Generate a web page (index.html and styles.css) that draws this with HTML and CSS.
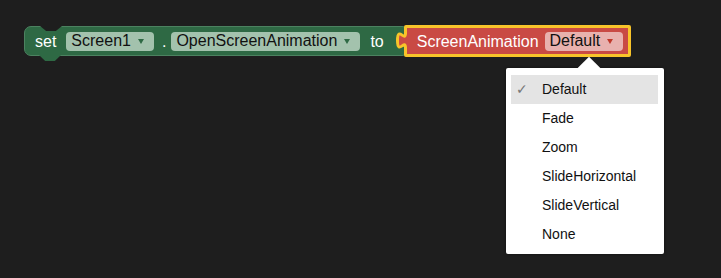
FILE: index.html
```html
<!DOCTYPE html>
<html lang="en">
	<head>
		<meta charset="UTF-8">
		<title>Blocks</title>
		<link rel="stylesheet" href="styles.css">
	</head>
	<body>
		<div class="workspace">
			<div class="stmt">
				<div class="block set-block">
					<span class="label">set</span>
					<span class="field green">Screen1<i class="caret"></i></span>
					<span class="label dot">.</span>
					<span class="field green">OpenScreenAnimation<i class="caret"></i></span>
					<span class="label to">to</span>
				</div>
				<div class="block value-block">
					<svg class="knob" width="14" height="25" viewBox="0 0 14 25">
						<rect x="9" y="6" width="5" height="13" fill="#c94a44"/>
						<path d="M10.5 0 V5 C10.5 15 2.5 -3 2.5 12.5 S10.5 10 10.5 20 V25" fill="#c94a44" stroke="#f8c42a" stroke-width="3"/>
					</svg>
					<span class="label">ScreenAnimation</span>
					<span class="field red">Default<i class="caret"></i></span>
				</div>
			</div>
			<div class="menu">
				<div class="item selected"><span class="check">&#10003;</span>Default</div>
				<div class="item">Fade</div>
				<div class="item">Zoom</div>
				<div class="item">SlideHorizontal</div>
				<div class="item">SlideVertical</div>
				<div class="item">None</div>
			</div>
		</div>
	</body>
</html>
```

FILE: styles.css
```css
*{
	margin: 0;
	padding: 0;
	box-sizing: border-box;
}
body{
	background: #1e1e1e;
	font-family: "Liberation Sans", Arial, sans-serif;
	width: 721px;
	height: 278px;
	overflow: hidden;
}
.workspace{
	position: relative;
	height: 278px;
	padding: 25px 0 0 24px;
}
.stmt{
	display: flex;
	align-items: center;
}
.block{
	position: relative;
	display: flex;
	align-items: center;
}
.label{
	color: #fff;
	font-size: 16px;
	line-height: 19px;
}
.set-block{
	height: 30px;
	padding: 0 24px 0 10px;
	background: #2e6944;
	border: 1px solid #4c8260;
	border-radius: 7px;
}
.set-block::before{
	content: "";
	position: absolute;
	left: 15px;
	top: -1px;
	width: 22px;
	height: 5px;
	background: #1e1e1e;
	clip-path: polygon(0 0, 100% 0, 72% 100%, 28% 100%);
}
.set-block::after{
	content: "";
	position: absolute;
	left: 14px;
	bottom: -6px;
	width: 22px;
	height: 6px;
	background: #2e6944;
	clip-path: polygon(0 0, 100% 0, 72% 100%, 28% 100%);
}
.set-block .label:first-child{
	margin-right: 10px;
}
.dot{
	margin: 0 5px 0 8px;
}
.to{
	margin-left: 10px;
}
.field{
	display: flex;
	align-items: center;
	height: 19px;
	padding: 0 10px 0 5px;
	border-radius: 4px;
	font-size: 16px;
	color: #111;
}
.field.green{
	background: #a3c2ad;
}
.field.red{
	background: #e8b1ae;
	margin-left: 6px;
}
.caret{
	width: 0;
	height: 0;
	margin-left: 7px;
	border-left: 3.5px solid transparent;
	border-right: 3.5px solid transparent;
	border-top: 5px solid #2e6944;
}
.field.red .caret{
	border-top-color: #c0392b;
}
.value-block{
	z-index: 1;
	height: 32px;
	margin-left: -5px;
	padding: 0 5px 0 10px;
	background: #c94a44;
	border: 3px solid #f8c42a;
	border-radius: 2px;
}
.knob{
	position: absolute;
	left: -12px;
	top: 0;
}
.menu{
	position: absolute;
	left: 506px;
	top: 68px;
	width: 158px;
	padding: 7px 6px 5px 5px;
	background: #fff;
	border-radius: 2px;
	box-shadow: 0 0 3px rgba(0, 0, 0, 0.5);
}
.menu::before{
	content: "";
	position: absolute;
	left: 75px;
	top: -8px;
	width: 16px;
	height: 16px;
	background: #fff;
	transform: rotate(45deg);
}
.item{
	position: relative;
	height: 29px;
	padding-left: 31px;
	font-size: 14px;
	line-height: 29px;
	color: #111;
}
.item.selected{
	background: #e4e4e4;
}
.check{
	position: absolute;
	left: 5px;
	top: 0;
	color: #777;
	font-family: "DejaVu Sans", sans-serif;
	font-size: 14px;
}
```
